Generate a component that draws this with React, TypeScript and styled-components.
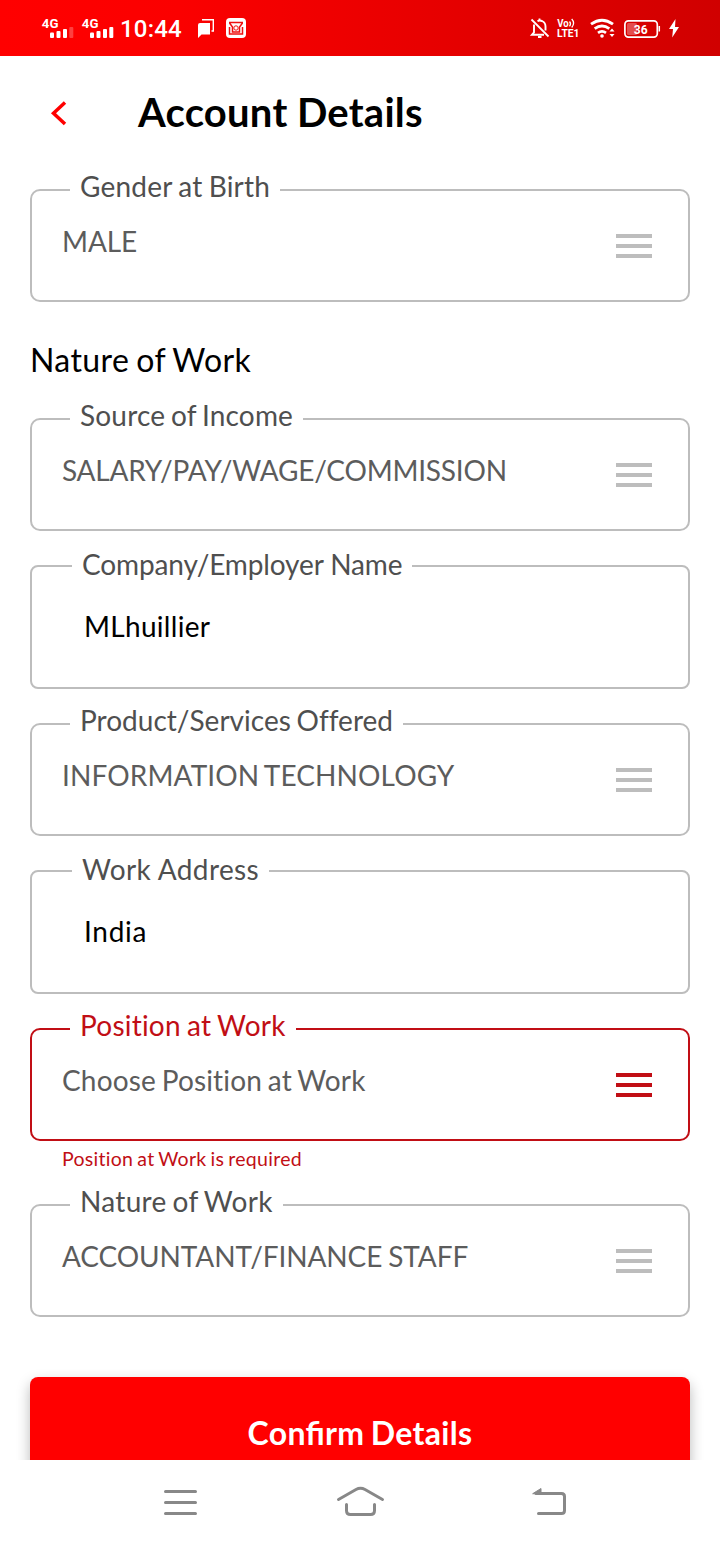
import React from "react";
import styled, { createGlobalStyle } from "styled-components";

const GlobalStyle = createGlobalStyle`
  * { box-sizing: border-box; }
  body { margin: 0; background: #fff; font-family: Lato, "Liberation Sans", sans-serif; }
  svg { display: block; flex: none; }
`;

/* letter and word spacing of a text, in pixels */
type Spacing = [number, number];

const Screen = styled.div`
  display: flex;
  flex-direction: column;
  width: 720px;
  height: 1544px;
  overflow: hidden;
  background: #fff;
`;

const StatusBar = styled.div`
  display: flex;
  justify-content: space-between;
  flex: none;
  height: 56px;
  background: linear-gradient(90deg, #ff0000 0%, #fb0000 25%, #d00000 100%);
`;

const StatusGroup = styled.div`
  display: flex;
  padding-left: 40px;
`;

const Clock = styled.span`
  width: 76px;
  font: 500 24px/58px Roboto, sans-serif;
  letter-spacing: 0.2px;
  color: #fff;
`;

const Header = styled.header`
  display: flex;
  align-items: center;
  flex: none;
  height: 114px;
  padding-left: 48px;
`;

const Title = styled.h1`
  margin: 0 0 2px 70px;
  font-size: 40px;
  line-height: 48px;
  font-weight: 700;
  letter-spacing: 0.25px;
  word-spacing: -0.6px;
  color: #000;
`;

const Content = styled.main`
  display: flex;
  flex-direction: column;
  flex: 1;
  min-height: 0;
  overflow: hidden;
  padding: 19px 30px 0;
`;

const Field = styled.section<{ $tall?: boolean; $error?: boolean; $gap?: number }>`
  display: flex;
  flex-direction: column;
  align-items: flex-start;
  flex: none;
  height: ${(p) => (p.$tall ? 124 : 113)}px;
  margin-bottom: ${(p) => p.$gap ?? 34}px;
  border: 2px solid ${(p) => (p.$error ? "#c10e15" : "#bdbdbd")};
  border-radius: ${(p) => (p.$tall ? 8 : 10)}px;
  color: ${(p) => (p.$error ? "#c10e15" : "#4f4f4f")};
`;

const Label = styled.label<{ $tall?: boolean; $spacing: Spacing }>`
  margin: ${(p) => (p.$tall ? "-20px 0 0 40px" : "-22px 0 0 38px")};
  padding: 0 10px;
  background: #fff;
  font-size: 28px;
  line-height: 34px;
  letter-spacing: ${(p) => p.$spacing[0]}px;
  word-spacing: ${(p) => p.$spacing[1]}px;
  white-space: nowrap;
`;

const SelectRow = styled.div`
  display: flex;
  justify-content: space-between;
  align-items: center;
  align-self: stretch;
  height: 40px;
  margin-top: 20px;
  padding: 0 36px 0 30px;
`;

const SelectValue = styled.span<{ $spacing: Spacing }>`
  margin-bottom: 4px;
  font-size: 28px;
  line-height: 34px;
  letter-spacing: ${(p) => p.$spacing[0]}px;
  word-spacing: ${(p) => p.$spacing[1]}px;
  color: #5c5c5c;
  white-space: nowrap;
`;

const Bars = styled.span<{ $error?: boolean }>`
  display: flex;
  flex-direction: column;
  justify-content: space-between;
  width: 36px;
  height: 24px;
  margin-top: 5px;

  i {
    height: 4px;
    background: ${(p) => (p.$error ? "#c10e15" : "#bdbdbd")};
  }
`;

const InputValue = styled.span<{ $spacing: Spacing }>`
  margin: 28px 0 0 52px;
  font-size: 28px;
  line-height: 34px;
  letter-spacing: ${(p) => p.$spacing[0]}px;
  color: #000;
`;

const SectionTitle = styled.h2`
  flex: none;
  height: 40px;
  margin: 4px 0 38px;
  font-size: 32px;
  line-height: 40px;
  font-weight: 400;
  letter-spacing: 0.4px;
  word-spacing: -1.5px;
  color: #000;
`;

const ErrorText = styled.p`
  flex: none;
  height: 24px;
  margin: 0 0 33px 32px;
  font-size: 19.5px;
  line-height: 24px;
  letter-spacing: 0.28px;
  word-spacing: -1.2px;
  color: #c10e15;
`;

const ConfirmButton = styled.button`
  flex: none;
  height: 112px;
  padding: 0 0 1px;
  border: 0;
  border-radius: 8px;
  background: #f00;
  box-shadow: 0 6px 14px rgba(0, 0, 0, 0.28);
  color: #fff;
  font: 700 32px/40px Lato, sans-serif;
  font-feature-settings: "liga" 1;
  letter-spacing: 0.35px;
  word-spacing: -1.9px;
`;

const NavBar = styled.nav`
  display: flex;
  flex: none;
  height: 84px;
  background: #fff;
`;

function Signal({ weak }: { weak?: boolean }) {
  return (
    <svg width="40" height="56" fill="#fff">
      <text x="1.800" y="28" fontFamily="Roboto, sans-serif" fontWeight="700" fontSize="13" textLength="16.600" lengthAdjust="spacingAndGlyphs">4G</text>
      <rect x="10" y="32.500" width="4" height="5.500" rx="1" />
      <rect x="16.500" y="31" width="4" height="7" rx="1" />
      <rect x="23" y="29" width="4" height="9" rx="1" />
      <rect x="29.300" y="27" width="4" height="11" rx="1" opacity={weak ? 0.25 : 1} />
    </svg>
  );
}

type FieldProps = { label: string; value: string; labelSpacing: Spacing; valueSpacing: Spacing };

function SelectField(p: FieldProps & { error?: boolean; gap?: number }) {
  return (
    <Field $error={p.error} $gap={p.gap}>
      <Label $spacing={p.labelSpacing}>{p.label}</Label>
      <SelectRow>
        <SelectValue $spacing={p.valueSpacing}>{p.value}</SelectValue>
        <Bars $error={p.error}><i /><i /><i /></Bars>
      </SelectRow>
    </Field>
  );
}

function InputField(p: FieldProps) {
  return (
    <Field $tall>
      <Label $tall $spacing={p.labelSpacing}>{p.label}</Label>
      <InputValue $spacing={p.valueSpacing}>{p.value}</InputValue>
    </Field>
  );
}

function LeftStatus() {
  return (
    <StatusGroup>
      <Signal weak />
      <Signal />
      <Clock>10:44</Clock>
      <svg width="60" height="56" fill="none">
        <path d="M4 23h10v11.500H5.500L2 38V25q0-2 2-2z" fill="#fff" />
        <path d="M6 19.700H17.300V31H15.500" stroke="#fff" strokeWidth="1.400" />
        <rect x="30" y="18" width="20" height="20" rx="4" fill="#fff" />
        <g stroke="#ee1010" strokeWidth="1.500">
          <path d="M33 22.500h14M33.500 23l3 4v5h7v-5l3-4M33.500 27v7h13v-7" />
          <circle cx="40" cy="28" r="2.200" strokeWidth="1" />
        </g>
      </svg>
    </StatusGroup>
  );
}

function RightStatus() {
  return (
    <svg width="200" height="56" fill="none" stroke="#fff">
      <path d="M11.500 19.500l17 17" strokeWidth="1.800" />
      <path d="M14 24.500v8l-2 2.200H24M17.500 21.200q2-1.200 4.500-.2 3.500 1.500 3.500 5.500v4" strokeWidth="1.900" />
      <path d="M19.500 18.500v2M18 37h3.500" strokeWidth="1.800" />
      <g fill="#fff" stroke="none" fontFamily="Roboto, sans-serif" fontWeight="700">
        <text x="37.300" y="26.900" fontSize="10" textLength="11.500" lengthAdjust="spacingAndGlyphs">Vo</text>
        <text x="37" y="37" fontSize="11" textLength="22.500" lengthAdjust="spacingAndGlyphs">LTE1</text>
      </g>
      <path d="M49.500 21.500q2 2.200 0 4.800M51.700 19q3.800 4 0 8.500" strokeWidth="1.300" />
      <path d="M71 24.200q11-8 22 0M74.700 28.700q7.300-5.500 14.600 0M78 32.800q4-2.800 8 0" strokeWidth="2.800" />
      <circle cx="82" cy="36" r="1.800" fill="#fff" stroke="none" />
      <path d="M92 28.500l2.500 3h-5zM92 37l-2.500-3h5z" fill="#fff" stroke="none" />
      <rect x="104.900" y="20.900" width="32.400" height="16.200" rx="3.500" strokeWidth="1.700" />
      <rect x="107" y="23" width="10" height="12" rx="1.500" fill="#fff" fillOpacity=".3" stroke="none" />
      <path d="M139.300 26v5.500" strokeWidth="1.500" />
      <text x="113.700" y="34" fill="#fff" stroke="none" fontFamily="Roboto, sans-serif" fontWeight="700" fontSize="12" textLength="14">36</text>
      <path d="M155.500 19l-6.500 10h4l-.8 8.500 6.800-10.500h-4z" fill="#fff" stroke="none" />
    </svg>
  );
}

export default function App() {
  return (
    <Screen>
      <GlobalStyle />
      <StatusBar>
        <LeftStatus />
        <RightStatus />
      </StatusBar>
      <Header>
        <svg width="20" height="26" fill="none" stroke="#f00" strokeWidth="3.500">
          <path d="M17 2.500L5.500 13.200 17 24" />
        </svg>
        <Title>Account Details</Title>
      </Header>
      <Content>
        <SelectField label="Gender at Birth" labelSpacing={[0.2, -1.1]} value="MALE" valueSpacing={[-0.1, 0]} />
        <SectionTitle>Nature of Work</SectionTitle>
        <SelectField label="Source of Income" labelSpacing={[0.18, -1.6]} value="SALARY/PAY/WAGE/COMMISSION" valueSpacing={[-0.21, 0]} />
        <InputField label="Company/Employer Name" labelSpacing={[-0.13, 0]} value="MLhuillier" valueSpacing={[0.3, 0]} />
        <SelectField label="Product/Services Offered" labelSpacing={[0.01, -1.4]} value="INFORMATION TECHNOLOGY" valueSpacing={[0.12, -2]} />
        <InputField label="Work Address" labelSpacing={[0.37, 0]} value="India" valueSpacing={[0.7, 0]} />
        <SelectField label="Position at Work" labelSpacing={[0.22, -1.2]} value="Choose Position at Work" valueSpacing={[0.15, -1.5]} error gap={6} />
        <ErrorText>Position at Work is required</ErrorText>
        <SelectField label="Nature of Work" labelSpacing={[0.3, -1.4]} value="ACCOUNTANT/FINANCE STAFF" valueSpacing={[-0.1, -1.1]} gap={60} />
        <ConfirmButton>Confirm Details</ConfirmButton>
      </Content>
      <NavBar>
        <svg width="720" height="84" fill="none" stroke="#888" strokeWidth="3" strokeLinecap="round" strokeLinejoin="round">
          <path d="M165.500 31.500h30M165.500 42.500h30M165.500 53.500h30" />
          <path d="M338.500 39.500l17.500-10q4.500-2.500 9 0l17.500 10M346.500 44.500v6q0 4 4 4h20q4 0 4-4v-6" />
          <path d="M538.500 53.500h23q3 0 3-3V36.500q0-3-3-3H536" />
          <path d="M533 33.500l8-5v5z" fill="#888" strokeWidth="1" />
        </svg>
      </NavBar>
    </Screen>
  );
}
